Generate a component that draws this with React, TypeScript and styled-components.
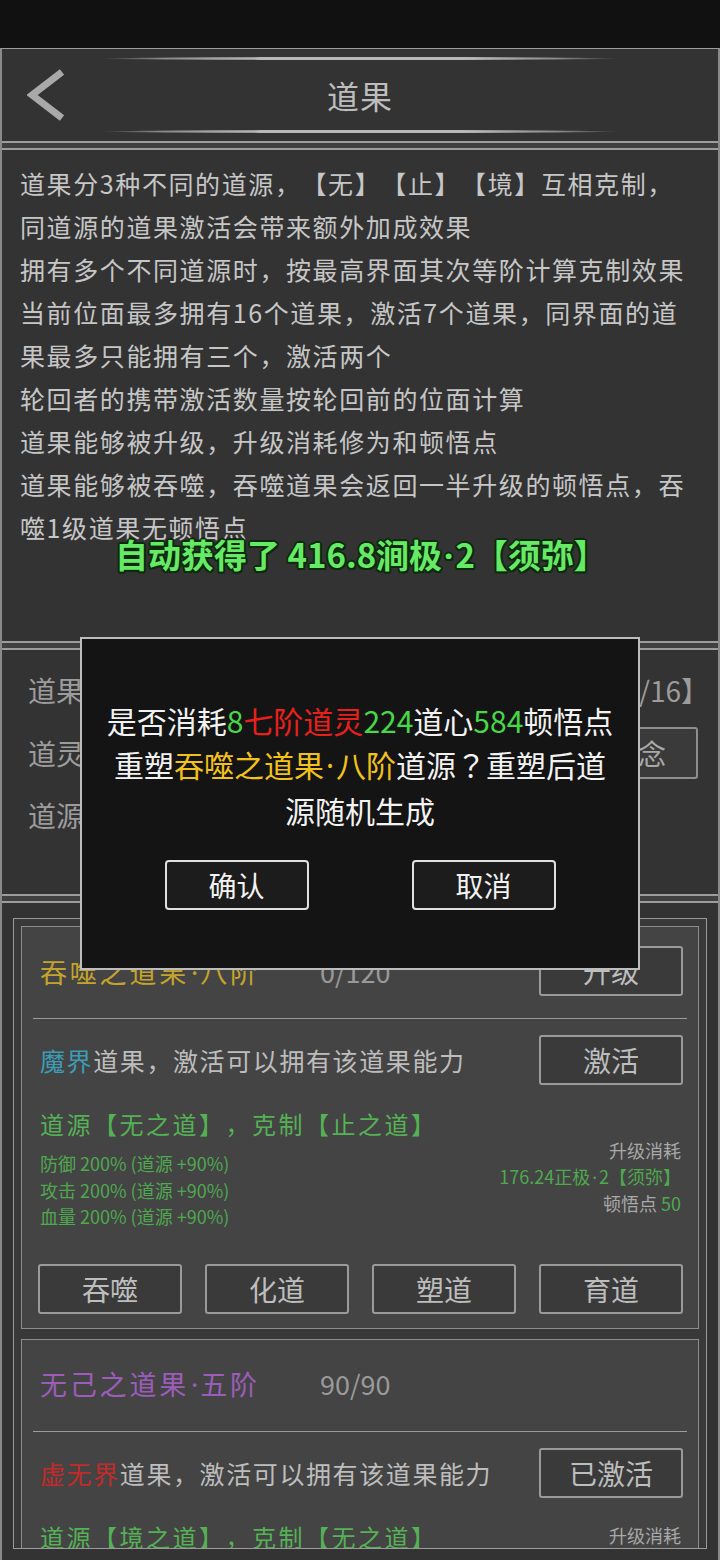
import React from 'react';
import styled, { createGlobalStyle } from 'styled-components';

const GlobalStyle = createGlobalStyle`
  html, body { margin: 0; padding: 0; background: #111; }
  body {
    font-family: "Noto Sans CJK SC", "Noto Sans", sans-serif;
    text-spacing-trim: space-all;
  }
  * { box-sizing: border-box; }
`;

const Page = styled.div`
  width: 720px;
  height: 1560px;
  position: relative;
  overflow: hidden;
  background: #111;
  display: flex;
  flex-direction: column;
`;

const StatusBar = styled.div`
  height: 48px;
  flex: none;
  background: #111;
`;

const Screen = styled.div`
  flex: 1;
  min-height: 0;
  display: flex;
  flex-direction: column;
  background: #333;
  border-top: 1px solid #9c9c9c;
  border-left: 2px solid #8a8a8a;
  border-right: 2px solid #8a8a8a;
`;

const Header = styled.header`
  height: 92px;
  flex: none;
  display: flex;
  flex-direction: column;
  padding: 8px 0;
`;

const Deco = styled.div`
  width: 520px;
  height: 3px;
  margin: 0 auto;
  border-radius: 50%;
  background: linear-gradient(90deg, rgba(170,170,170,0) 0%, #8a8a8a 12%, #b8b8b8 30%, #b8b8b8 72%, #8a8a8a 88%, rgba(170,170,170,0) 100%);
`;

const HeaderRow = styled.div`
  flex: 1;
  display: grid;
  grid-template-columns: 1fr auto 1fr;
  align-items: center;
`;

const BackButton = styled.button`
  justify-self: start;
  margin-left: 25px;
  padding: 0;
  border: 0;
  background: transparent;
  display: flex;
  width: 40px;
  height: 52px;
`;

const Title = styled.h1`
  margin: 0;
  font-size: 32px;
  font-weight: 400;
  color: #bdbdbd;
  letter-spacing: 1px;
`;

const Sep = styled.div`
  height: 9px;
  flex: none;
  background: #404040;
  border-top: 2px solid #9c9c9c;
  border-bottom: 2px solid #9c9c9c;
`;

const InfoPanel = styled.div`
  height: 491px;
  flex: none;
  padding: 12px 24px 0 18px;
`;

const InfoLine = styled.p`
  margin: 0;
  font-size: 25px;
  line-height: 43px;
  letter-spacing: 1.6px;
  color: #c6c6c6;
`;

const StatsPanel = styled.div`
  height: 244px;
  flex: none;
  padding: 15px 9px 0 26px;
  display: grid;
  grid-auto-rows: 50px;
  row-gap: 12.5px;
  align-content: start;
`;

const StatsRow = styled.div`
  display: flex;
  align-items: center;
  justify-content: space-between;
`;

const StatsText = styled.span`
  font-size: 28px;
  color: #9c9c9c;
`;

const PanelButton = styled.button`
  width: 120px;
  height: 52px;
  margin-right: 11px;
  border: 2px solid #8e8e8e;
  border-radius: 3px;
  background: #3a3a3a;
  color: #a8a8a8;
  font-family: inherit;
  font-size: 28px;
  padding: 0;
`;

const ListSection = styled.div`
  flex: 1;
  min-height: 0;
  display: flex;
  padding: 15px 11px 11px;
`;

const ListFrame = styled.div`
  flex: 1;
  min-height: 0;
  overflow: hidden;
  border: 1px solid #9a9a9a;
  background: #393939;
  padding: 7px;
  display: flex;
  flex-direction: column;
  gap: 10px;
`;

const Card = styled.section`
  flex: none;
  border: 1px solid #8c8c8c;
  background: #444;
  padding: 19px 15px 14px;
`;

const TopRow = styled.div`
  height: 50px;
  display: grid;
  grid-template-columns: 280px 1fr 144px;
  align-items: center;
  padding-left: 3px;
`;

const CardTitle = styled.span<{ $color: string }>`
  font-size: 27px;
  letter-spacing: 2.8px;
  color: ${p => p.$color};
`;

const Count = styled.span`
  font-size: 27px;
  color: #9a9a9a;
`;

const CardButton = styled.button`
  width: 144px;
  height: 50px;
  border: 2px solid #9a9a9a;
  border-radius: 3px;
  background: #3a3a3a;
  color: #bdbdbd;
  font-family: inherit;
  font-size: 28px;
  padding: 0;
`;

const Divider = styled.hr`
  margin: 22px -4px 16px;
  border: 0;
  height: 1px;
  background: #9a9a9a;
`;

const DescRow = styled.div`
  height: 50px;
  display: grid;
  grid-template-columns: 1fr 144px;
  align-items: center;
  padding-left: 3px;
`;

const DescText = styled.span`
  font-size: 25px;
  letter-spacing: 1.6px;
  color: #bdbdbd;
`;

const World = styled.span<{ $color: string }>`
  color: ${p => p.$color};
`;

const InfoGrid = styled.div`
  margin-top: 24px;
  display: grid;
  grid-template-columns: 1fr auto;
  padding-left: 3px;
  padding-right: 2px;
`;

const SourceLine = styled.div`
  font-size: 24px;
  line-height: 30px;
  letter-spacing: 2.5px;
  color: #55b155;
`;

const StatList = styled.div`
  padding-top: 11px;
`;

const StatLine = styled.div`
  font-size: 18px;
  line-height: 26.5px;
  color: #4fa84f;
`;

const CostList = styled.div<{ $offset: number }>`
  align-self: start;
  margin-top: ${p => p.$offset}px;
  text-align: right;
`;

const CostLine = styled.div`
  font-size: 18px;
  line-height: 26px;
  color: #a8a8a8;
`;

const Green = styled.span`
  color: #4fa84f;
`;

const Dot = styled.span`
  font-family: "Noto Sans", "DejaVu Sans", sans-serif;
  letter-spacing: 0;
  padding: 0 2px;
`;

const FullMark = styled.span`
  font-family: "Noto Sans CJK JP", "Noto Sans CJK SC", sans-serif;
`;

const ButtonRow = styled.div`
  margin-top: 34px;
  padding: 0 0 0 1px;
  display: flex;
  justify-content: space-between;
`;

const Toast = styled.div`
  position: absolute;
  top: 532px;
  left: 115px;
  font-size: 33px;
  line-height: 44px;
  font-weight: 700;
  color: #66ea66;
  white-space: nowrap;
  text-shadow: -2px 0 #0b2a0b, 2px 0 #0b2a0b, 0 -2px #0b2a0b, 0 2px #0b2a0b,
    -1.5px -1.5px #0b2a0b, 1.5px 1.5px #0b2a0b, -1.5px 1.5px #0b2a0b, 1.5px -1.5px #0b2a0b;
`;

const Dialog = styled.div`
  position: absolute;
  top: 637px;
  left: 80px;
  width: 560px;
  height: 333px;
  background: #141414;
  border: 2px solid #bdbdbd;
  padding: 59px 22px 0;
  display: flex;
  flex-direction: column;
  align-items: center;
`;

const DialogText = styled.p`
  margin: 0;
  font-size: 30px;
  line-height: 44px;
  color: #f2f2f2;
  text-align: center;
`;

const Tone = styled.span<{ $c: string }>`
  color: ${p => p.$c};
`;

const DialogActions = styled.div`
  margin-top: 28px;
  display: flex;
  gap: 103px;
`;

const DialogButton = styled.button`
  width: 144px;
  height: 50px;
  border: 2px solid #e0e0e0;
  border-radius: 4px;
  background: #1c1c1c;
  color: #f2f2f2;
  font-family: inherit;
  font-size: 28px;
  padding: 0;
`;

function dotted(text: string) {
  const parts = text.split('·');
  return parts.map((p, i) => (
    <React.Fragment key={i}>
      {i > 0 && <Dot>·</Dot>}
      {p}
    </React.Fragment>
  ));
}

type CardData = {
  title: string;
  titleColor: string;
  count: string;
  topAction?: string;
  world: string;
  worldColor: string;
  action: string;
  source: string;
  stats: string[];
  cost: { text: string; value?: string; green?: boolean }[];
  costOffset: number;
};

const cards: CardData[] = [
  {
    title: '吞噬之道果·八阶',
    titleColor: '#c4a32c',
    count: '0/120',
    topAction: '升级',
    world: '魔界',
    worldColor: '#3c9cb6',
    action: '激活',
    source: '道源【无之道】，克制【止之道】',
    stats: ['防御 200% (道源 +90%)', '攻击 200% (道源 +90%)', '血量 200% (道源 +90%)'],
    cost: [
      { text: '升级消耗' },
      { text: '176.24正极·2【须弥】', green: true },
      { text: '顿悟点 ', value: '50' },
    ],
    costOffset: 28,
  },
  {
    title: '无己之道果·五阶',
    titleColor: '#9b5db9',
    count: '90/90',
    world: '虚无界',
    worldColor: '#c42a2a',
    action: '已激活',
    source: '道源【境之道】，克制【无之道】',
    stats: ['防御 150% (道源 +60%)', '攻击 150% (道源 +60%)', '血量 150% (道源 +60%)'],
    cost: [{ text: '升级消耗' }, { text: '已满级', green: true }],
    costOffset: 0,
  },
];

const infoLines = [
  '道果分3种不同的道源，【无】【止】【境】互相克制，',
  '同道源的道果激活会带来额外加成效果',
  '拥有多个不同道源时，按最高界面其次等阶计算克制效果',
  '当前位面最多拥有16个道果，激活7个道果，同界面的道果最多只能拥有三个，激活两个',
  '轮回者的携带激活数量按轮回前的位面计算',
  '道果能够被升级，升级消耗修为和顿悟点',
  '道果能够被吞噬，吞噬道果会返回一半升级的顿悟点，吞噬1级道果无顿悟点',
];

function FruitCard({ d }: { d: CardData }) {
  return (
    <Card>
      <TopRow>
        <CardTitle $color={d.titleColor}>{dotted(d.title)}</CardTitle>
        <Count>{d.count}</Count>
        {d.topAction ? <CardButton>{d.topAction}</CardButton> : <span />}
      </TopRow>
      <Divider />
      <DescRow>
        <DescText>
          <World $color={d.worldColor}>{d.world}</World>道果，激活可以拥有该道果能力
        </DescText>
        <CardButton>{d.action}</CardButton>
      </DescRow>
      <InfoGrid>
        <div>
          <SourceLine>{d.source}</SourceLine>
          <StatList>
            {d.stats.map(s => (
              <StatLine key={s}>{s}</StatLine>
            ))}
          </StatList>
        </div>
        <CostList $offset={d.costOffset}>
          {d.cost.map(c => (
            <CostLine key={c.text}>
              {c.green ? <Green>{dotted(c.text)}</Green> : c.text}
              {c.value && <Green>{c.value}</Green>}
            </CostLine>
          ))}
        </CostList>
      </InfoGrid>
      <ButtonRow>
        {['吞噬', '化道', '塑道', '育道'].map(b => (
          <CardButton key={b}>{b}</CardButton>
        ))}
      </ButtonRow>
    </Card>
  );
}

export default function App() {
  return (
    <>
      <GlobalStyle />
      <Page>
        <StatusBar />
        <Screen>
          <Header>
            <Deco />
            <HeaderRow>
              <BackButton aria-label="返回">
                <svg width="40" height="52" viewBox="0 0 40 52">
                  <polyline points="35,3 5,26 35,49" fill="none" stroke="#a9a9a9" strokeWidth="7" />
                </svg>
              </BackButton>
              <Title>道果</Title>
              <span />
            </HeaderRow>
            <Deco />
          </Header>
          <Sep />
          <InfoPanel>
            {infoLines.map(l => (
              <InfoLine key={l}>{l}</InfoLine>
            ))}
          </InfoPanel>
          <Sep />
          <StatsPanel>
            <StatsRow>
              <StatsText>道果激活【7/7】</StatsText>
              <StatsText>拥有【11/16】</StatsText>
            </StatsRow>
            <StatsRow>
              <StatsText>道灵：224</StatsText>
              <PanelButton>道念</PanelButton>
            </StatsRow>
            <StatsRow>
              <StatsText>道源：无之道</StatsText>
            </StatsRow>
          </StatsPanel>
          <Sep />
          <ListSection>
            <ListFrame>
              {cards.map(c => (
                <FruitCard key={c.title} d={c} />
              ))}
            </ListFrame>
          </ListSection>
        </Screen>
        <Toast>自动获得了 416.8涧极{dotted('·2【须弥】')}</Toast>
        <Dialog>
          <DialogText>
            是否消耗<Tone $c="#46d846">8</Tone>
            <Tone $c="#e8201c">七阶道灵</Tone>
            <Tone $c="#46d846">224</Tone>道心<Tone $c="#46d846">584</Tone>顿悟点重塑
            <Tone $c="#f2c21a">{dotted('吞噬之道果·八阶')}</Tone>道源<FullMark>？</FullMark>重塑后道源随机生成
          </DialogText>
          <DialogActions>
            <DialogButton>确认</DialogButton>
            <DialogButton>取消</DialogButton>
          </DialogActions>
        </Dialog>
      </Page>
    </>
  );
}
